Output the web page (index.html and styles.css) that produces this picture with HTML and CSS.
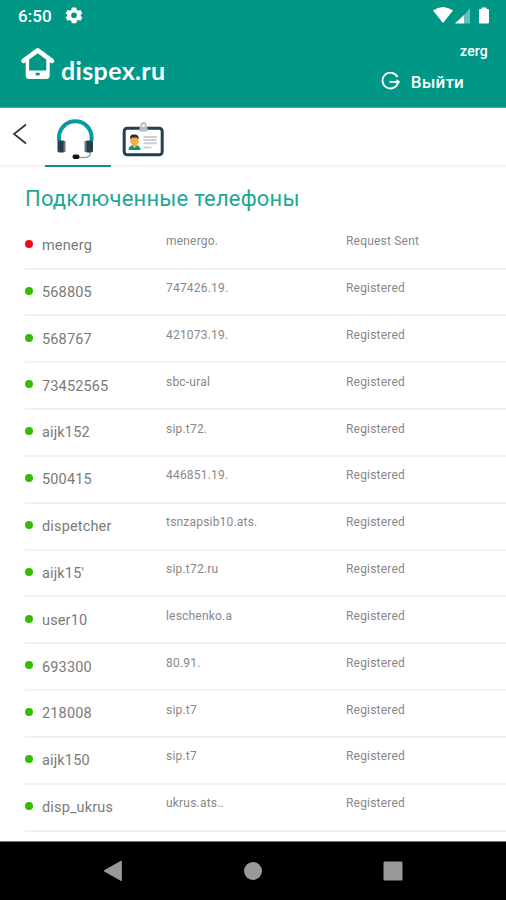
FILE: index.html
```html
<!DOCTYPE html>
<html lang="ru">
<head>
<meta charset="utf-8">
<title>dispex.ru</title>
<link rel="stylesheet" href="styles.css">
</head>
<body>
<div class="app">
  <header class="header">
    <div class="status">
      <span class="time">6:50</span>
      <svg class="gear" width="18" height="18" viewBox="0 0 24 24"><path fill="#fff" fill-rule="evenodd" d="M9 2h6l.6 3 2 1.200 3-1 2.600 4.500-2.300 2.100v1.400l2.300 2.100-2.600 4.500-3-1-2 1.200L15 23H9l-.6-3-2-1.200-3 1-2.600-4.500 2.300-2.100v-1.400L.8 9.700l2.600-4.500 3 1 2-1.200zM12 8.500a3.800 3.800 0 1 0 0 7.600 3.800 3.800 0 0 0 0-7.600z"/></svg>
      <svg class="signals" width="60" height="18" viewBox="0 0 60 18"><path fill="#fff" d="M0 3.500Q10-3.500 20 3.500L10 16z"/><path fill="#fff" d="M22 16.500 31 8v8.500z"/><path fill="#fff" opacity=".4" d="M31 8l6-6.500v15h-6z"/><path fill="#fff" d="M46 3q0-1 1-1h1.500V.5h5V2H55q1 0 1 1v12.500q0 1-1 1h-8q-1 0-1-1z"/></svg>
    </div>
    <div class="brandbar">
      <div class="brand">
        <svg width="36" height="34" viewBox="0 0 36 34"><path d="M3.500 14.800 17.700 4.300 32 14.800" fill="none" stroke="#fff" stroke-width="4.600" stroke-linecap="round" stroke-linejoin="round"/><path d="M7.400 13.500v16q0 1.700 1.700 1.700h17.200q1.700 0 1.700-1.700v-16" fill="none" stroke="#fff" stroke-width="3.400"/><path fill="#fff" fill-rule="evenodd" d="M7 24.500h21v7.200H7zM15.700 26.800v3h4v-3z"/></svg>
        <span class="brand-name">dispex.ru</span>
      </div>
      <div class="account">
        <span class="user">zerg</span>
        <div class="logout">
          <svg width="20" height="20" viewBox="0 0 20 20" fill="none" stroke="#fff" stroke-width="1.800"><path d="M16.500 5A7.900 7.900 0 1 0 17.200 10M8.500 9.800H18.500"/><path d="M15.500 7.800 18 9.800 15.500 11.800" stroke-width="1.300"/></svg>
          <span>Выйти</span>
        </div>
      </div>
    </div>
  </header>
  <nav class="tabs">
    <svg class="back" width="16" height="22" viewBox="0 0 16 22"><path d="M14 1.500 2 11l12 9.500" fill="none" stroke="#333" stroke-width="1.700"/></svg>
    <div class="tab active">
      <svg width="42" height="44" viewBox="0 0 42 44"><path d="M5 23v-3.500a16.300 16.300 0 0 1 32.600 0V23" fill="none" stroke="#079aa5" stroke-width="4"/><path d="M36 34v1.500q0 4-5 4h-7" fill="none" stroke="#9aa5ad" stroke-width="1.500"/><rect x="3.500" y="22.500" width="7.500" height="12" rx="1.800" fill="#283e4b"/><rect x="31.500" y="22.500" width="7.500" height="12" rx="1.800" fill="#283e4b"/><rect x="9.500" y="23" width="2" height="11" fill="#6b7a83"/><rect x="30.500" y="23" width="2" height="11" fill="#6b7a83"/><rect x="18.500" y="36.500" width="7" height="4.500" rx="2" fill="#101620"/></svg>
    </div>
    <div class="tab">
      <svg width="42" height="38" viewBox="0 0 42 38"><rect x="2.200" y="8.200" width="38" height="26.600" rx="3" fill="#fff" stroke="#263f4c" stroke-width="3"/><path fill="#b5bdc2" d="M17.500 11.500V8q0-1.500 1-2V5a3 3 0 0 1 6 0v1q1 .5 1 2v3.500z"/><circle cx="21.500" cy="5.500" r="1.500" fill="#fff"/><path fill="#079486" d="M6.500 30q0-4.200 5-5h2q5 .8 5 5z"/><path fill="#f4ad42" d="M10.500 23h4v3.500l-2 1.500-2-1.500z"/><rect x="8.300" y="16" width="8.400" height="9" rx="4" fill="#f4ad42"/><path fill="#262c30" d="M8.300 19q-1-4.500 3-4.500 5.700-.8 5.400 4.500l-2-1.500h-4z"/><path stroke="#ccd1d4" stroke-width="2" d="M21.500 17H35M21.500 20h13M21.500 23.300H35M21.500 27.500h8"/></svg>
    </div>
  </nav>
  <main class="content">
    <h1>Подключенные телефоны</h1>
    <ul class="phones">
      <li><i class="dot off"></i><span class="name">menerg</span><span class="host">menergo.</span><span class="state">Request Sent</span></li>
      <li><i class="dot"></i><span class="name">568805</span><span class="host">747426.19.</span><span class="state">Registered</span></li>
      <li><i class="dot"></i><span class="name">568767</span><span class="host">421073.19.</span><span class="state">Registered</span></li>
      <li><i class="dot"></i><span class="name">73452565</span><span class="host">sbc-ural</span><span class="state">Registered</span></li>
      <li><i class="dot"></i><span class="name">aijk152</span><span class="host">sip.t72.</span><span class="state">Registered</span></li>
      <li><i class="dot"></i><span class="name">500415</span><span class="host">446851.19.</span><span class="state">Registered</span></li>
      <li><i class="dot"></i><span class="name">dispetcher</span><span class="host">tsnzapsib10.ats.</span><span class="state">Registered</span></li>
      <li><i class="dot"></i><span class="name">aijk15&#39;</span><span class="host">sip.t72.ru</span><span class="state">Registered</span></li>
      <li><i class="dot"></i><span class="name">user10</span><span class="host">leschenko.a</span><span class="state">Registered</span></li>
      <li><i class="dot"></i><span class="name">693300</span><span class="host">80.91.</span><span class="state">Registered</span></li>
      <li><i class="dot"></i><span class="name">218008</span><span class="host">sip.t7</span><span class="state">Registered</span></li>
      <li><i class="dot"></i><span class="name">aijk150</span><span class="host">sip.t7</span><span class="state">Registered</span></li>
      <li><i class="dot"></i><span class="name">disp_ukrus</span><span class="host">ukrus.ats..</span><span class="state">Registered</span></li>
    </ul>
  </main>
  <footer class="navbar">
    <svg width="20" height="22" viewBox="0 0 20 22"><path fill="#999" d="M18 .8q.9-.4.900.6v19q0 1-.9.600L1.200 11.500q-1-.6 0-1.200z"/></svg>
    <svg width="20" height="22" viewBox="0 0 20 22"><circle cx="10" cy="11" r="9" fill="#999"/></svg>
    <svg width="20" height="22" viewBox="0 0 20 22"><rect x=".5" y="1.500" width="19" height="19" rx="1.200" fill="#999"/></svg>
  </footer>
</div>
</body>
</html>
```
FILE: styles.css
```css
* { box-sizing: border-box; }
body { margin: 0; background: #fff; font-family: Roboto, "Liberation Sans", sans-serif; }
svg { display: block; flex: none; }
.app { display: flex; flex-direction: column; width: 506px; height: 900px; overflow: hidden; }
.header { flex: none; height: 108px; background: #009787; color: #fff; border-bottom: 1px solid #45aca1; }
.status { display: flex; align-items: center; height: 32px; padding: 0 12px 0 18px; }
.time { width: 47px; font-size: 17px; font-weight: 500; letter-spacing: .1px; }
.gear { margin-top: -2px; }
.signals { margin-left: auto; margin-right: 1px; }
.brandbar { display: flex; justify-content: space-between; padding: 0 18px 0 20px; }
.brand { display: flex; gap: 5px; padding-top: 14px; }
.brand-name { padding-top: 8px; font: 700 25px/32px Lato, sans-serif; letter-spacing: .35px; }
.account { display: flex; flex-direction: column; padding-top: 10px; }
.user { align-self: flex-end; font-size: 14px; line-height: 18px; font-weight: 500; letter-spacing: .2px; }
.logout { display: flex; align-items: center; gap: 10px; height: 24px; margin: 10px 24px 0 0; font-size: 17px; font-weight: 500; letter-spacing: .2px; }
.tabs { display: flex; flex: none; height: 59px; padding-left: 12px; border-bottom: 2px solid #f3f3f3; }
.back { margin: 15px 17px 0 0; }
.tab { display: flex; justify-content: center; width: 66px; height: 59px; margin-right: 2px; padding-top: 10px; }
.tab svg { margin-left: -6px; }
.tab.active { border-bottom: 2px solid #0b917f; }
.tab:last-child { padding-top: 12px; margin-right: 0; }
.tab:last-child svg { margin-left: -7px; }
.content { flex: 1; min-height: 0; padding-left: 25px; overflow: hidden; }
h1 { height: 32px; margin: 16px 0 7.800px; color: #23a696; font-size: 22px; line-height: 32px; font-weight: 400; letter-spacing: .2px; white-space: nowrap; }
.phones { margin: 0; padding: 0; list-style: none; }
.phones li { display: grid; grid-template-columns: 17px 124px 180px 1fr; height: 46.830px; border-bottom: 2px solid #f2f2f2; color: #7a7a7a; }
.dot { width: 8px; height: 8px; margin-top: 17.200px; border-radius: 50%; background: #32bd00; }
.dot.off { background: #f50814; }
.name { padding-top: 13.300px; font-size: 14.500px; line-height: 20px; letter-spacing: .15px; }
.host, .state { padding-top: 9.500px; font-size: 12px; line-height: 18px; color: #888; letter-spacing: .2px; }
.navbar { display: flex; flex: none; align-items: center; justify-content: center; gap: 120px; height: 59px; border-top: 1px solid #777; background: #000; }
```
